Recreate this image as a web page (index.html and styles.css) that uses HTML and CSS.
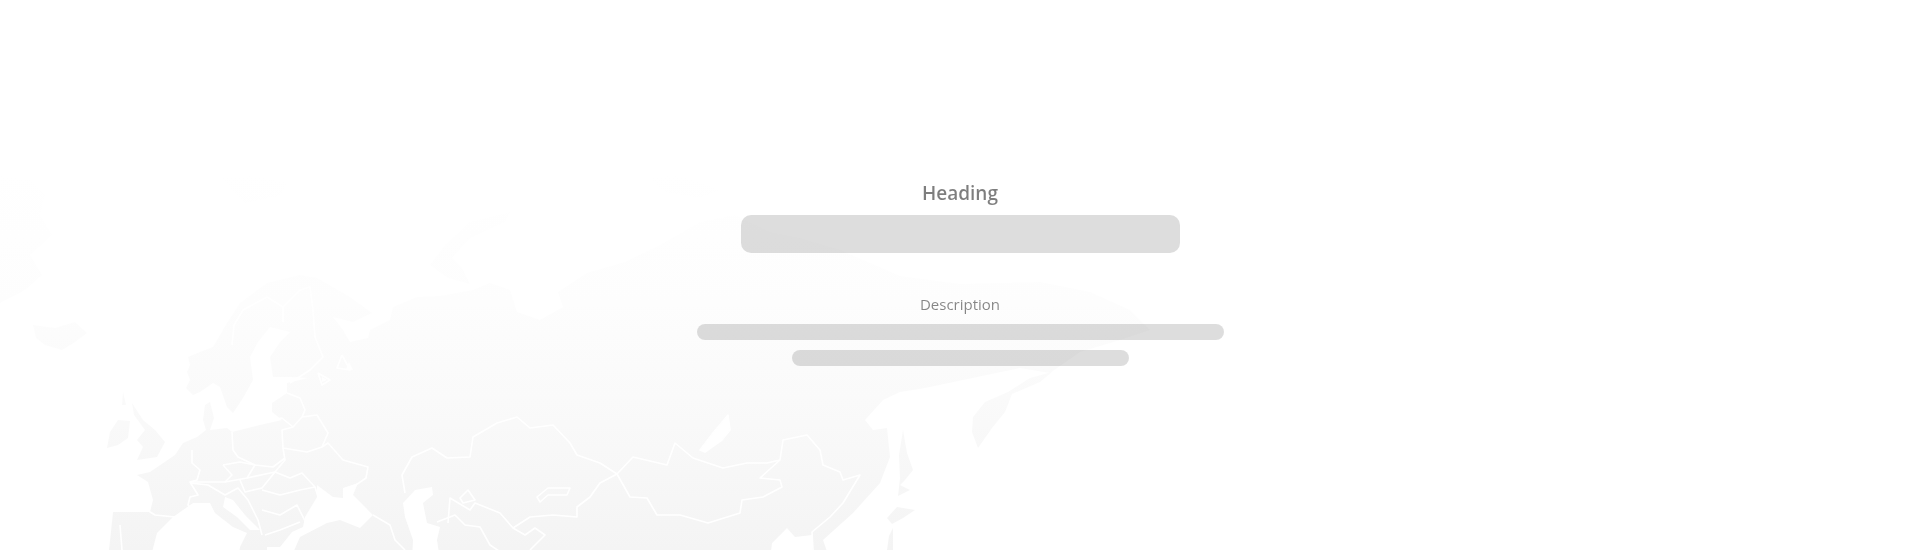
FILE: index.html
```html
<!DOCTYPE html>
<html lang="en">
<head>
    <meta charset="UTF-8">
    <meta name="viewport" content="width=device-width, initial-scale=1.0">
    <title>Heading</title>
    <link rel="stylesheet" href="styles.css">
</head>
<body>
    <!-- world map behind the placeholder -->
    <svg class="world-map" viewBox="0 0 1920 550" aria-hidden="true">
        <defs>
            <linearGradient id="landFade" gradientUnits="userSpaceOnUse" x1="0" y1="170" x2="0" y2="550">
                <stop offset="0" stop-color="#ffffff"/>
                <stop offset="0.35" stop-color="#fdfdfd"/>
                <stop offset="0.6" stop-color="#fafafa"/>
                <stop offset="1" stop-color="#f4f4f4"/>
            </linearGradient>
        </defs>

        <g fill="url(#landFade)">
            <!-- Eurasia -->
            <path d="M108 560 L112 522 L113 512 L150 512 L153 500 L148 482 L137 475 L150 472 L175 455 L183 443 L197 437 L206 430 L203 420 L205 405 L210 402 L214 418 L210 430 L227 428 L232 432 L260 425 L282 420 L272 412 L272 403 L287 393 L287 383 L308 378 L290 377 L273 377 L270 357 L280 342 L290 332 L270 327 L258 342 L250 357 L253 380 L243 398 L233 413 L227 407 L220 387 L213 383 L200 392 L193 395 L186 388 L190 380 L187 372 L190 365 L188 357 L200 352 L213 347 L220 335 L227 323 L240 303 L267 283 L300 275 L317 278 L350 297 L372 313 L353 322 L333 317 L343 330 L350 342 L368 338 L370 330 L390 320 L393 307 L417 297 L440 296 L473 290 L490 283 L510 290 L517 312 L540 320 L563 307 L558 292 L587 273 L625 262 L660 245 L700 222 L735 215 L770 232 L800 238 L840 250 L900 276 L960 284 L1040 282 L1090 292 L1130 310 L1150 330 L1120 340 L1080 352 L1050 373 L1020 368 L963 380 L925 388 L900 392 L883 400 L865 420 L873 430 L887 428 L890 457 L880 483 L853 513 L823 540 L830 560 Z"/>
            <!-- Kamchatka -->
            <path d="M1052 372 L1030 378 L1008 392 L985 402 L973 417 L972 432 L978 448 L992 428 L1005 412 L1012 394 L1040 382 Z"/>
            <!-- Sakhalin -->
            <path d="M903 430 L907 453 L913 470 L905 480 L900 485 L910 490 L898 496 L900 478 L899 455 Z"/>
            <!-- Japan -->
            <path d="M887 518 L897 507 L915 510 L903 518 L892 524 Z"/>
            <path d="M893 528 L893 550 L887 550 L889 536 Z"/>
            <!-- Iceland -->
            <path d="M33 325 L55 328 L75 322 L87 333 L75 342 L62 350 L45 345 L36 338 Z"/>
            <!-- Greenland tip -->
            <path d="M0 175 L30 180 L45 195 L40 215 L52 235 L30 255 L42 275 L25 290 L0 303 Z"/>
            <!-- Svalbard -->
            <path d="M222 178 L250 176 L288 182 L280 196 L245 203 L232 190 Z"/>
            <!-- Novaya Zemlya -->
            <path d="M510 212 L470 222 L445 245 L430 265 L448 278 L470 284 L462 268 L452 258 L470 238 L505 222 Z"/>
            <!-- Severnaya Zemlya -->
            <path d="M648 177 L680 175 L720 190 L700 198 L665 192 Z"/>
            <!-- British Isles -->
            <path d="M132 403 L143 420 L155 430 L165 442 L157 457 L137 460 L143 447 L137 440 L145 430 L134 415 Z"/>
            <path d="M107 448 L110 432 L118 420 L130 421 L128 438 L118 445 Z"/>
            <path d="M123 392 L126 405 L122 405 Z"/>
            <!-- Mediterranean islands -->
            <path d="M207 515 L211 517 L208 531 L205 528 Z"/>
            <path d="M205 533 L209 533 L207 545 L203 545 Z"/>
        </g>

        <!-- inland seas -->
        <g class="seas">
            <path d="M150 560 L157 533 L173 517 L193 503 L210 503 L215 513 L233 527 L247 533 L240 547 L238 560 Z"/>
            <path d="M225 497 L223 507 L237 517 L250 530 L260 530 L245 515 L233 500 Z"/>
            <path d="M267 560 L267 547 L280 547 L292 532 L303 527 L305 517 L317 497 L317 485 L333 497 L343 498 L343 488 L358 483 L353 495 L373 515 L360 528 L340 520 L327 523 L300 537 L290 560 Z"/>
            <path d="M403 503 L415 490 L432 487 L433 495 L423 503 L427 523 L440 527 L437 540 L440 560 L412 560 L413 540 L405 517 Z"/>
            <path d="M772 543 L787 528 L795 537 L812 535 L812 560 L770 560 Z"/>
            <path d="M700 450 L713 433 L728 415 L730 430 L722 440 L705 452 Z"/>
            <path d="M349 362 L353 370 L346 369 Z"/>
            <path d="M322 377 L327 380 L322 382 Z"/>
        </g>

        <!-- borders -->
        <g class="borders">
            <path d="M232 345 L234 325 L243 310 L267 297 L283 307 L283 322"/>
            <path d="M283 307 L300 290 L310 287 L313 310 L315 337 L323 357 L310 370 L290 383"/>
            <path d="M318 373 L330 380 L322 385 L318 373"/>
            <path d="M342 355 L350 370 L337 368 L342 355"/>
            <path d="M302 417 L317 415 L328 433 L322 447 L307 452 L283 448 L282 430 L293 427 L302 417"/>
            <path d="M287 393 L300 398 L305 410 L302 417"/>
            <path d="M270 420 L282 418 L293 427"/>
            <path d="M283 448 L285 460 L275 472 L290 478 L302 473 L315 487 L318 497"/>
            <path d="M322 447 L328 443 L343 460 L368 467 L366 478 L353 487"/>
            <path d="M232 432 L233 450 L238 457 L255 465 L273 467 L285 458"/>
            <path d="M192 450 L192 463 L200 470 L197 480 L190 482 L198 495 L190 497 L188 505 L192 510"/>
            <path d="M223 465 L232 475 L225 482 L210 482 L190 482"/>
            <path d="M223 465 L240 462 L255 465 L247 478 L225 482"/>
            <path d="M247 478 L275 472 L262 488 L245 492 L240 480"/>
            <path d="M190 483 L208 485 L225 495 L238 488 L248 500 L258 520 L262 535"/>
            <path d="M262 490 L280 495 L300 490 L315 487"/>
            <path d="M262 510 L280 515 L297 505 L308 527"/>
            <path d="M265 535 L280 530 L300 522"/>
            <path d="M147 510 L155 515 L175 517"/>
            <path d="M120 525 L122 550"/>
            <path d="M405 493 L402 475 L412 457 L432 448 L447 458 L470 457 L473 437 L497 423 L517 417 L530 428 L553 425 L570 443 L577 455 L600 463 L617 474"/>
            <path d="M617 474 L633 457 L667 465 L675 443 L693 458 L723 468 L747 463 L767 463 L780 460 L783 440 L807 435 L820 450 L823 465 L840 472 L843 480 L860 475 L843 503 L830 517 L812 532 L813 550"/>
            <path d="M617 474 L600 483 L590 497 L577 507 L577 517 L553 515 L530 517 L513 528 L500 513 L475 503 L470 510 L450 498 L448 523"/>
            <path d="M617 474 L630 497 L647 498 L657 515 L680 515 L708 523 L740 513 L742 500 L763 497 L782 487 L780 480 L760 478 L780 460"/>
            <path d="M700 450 L713 433 L728 415 L730 430 L722 440 L705 452 Z"/>
            <path d="M537 497 L548 488 L570 488 L567 495 L548 495 L540 502 Z"/>
            <path d="M460 498 L468 490 L475 500 L463 503 Z"/>
            <path d="M513 528 L525 535 L535 528 L545 535 L530 550"/>
            <path d="M437 522 L455 515 L465 525 L480 527 L490 545 L505 555"/>
            <path d="M373 515 L390 525 L395 540 L405 550"/>
        </g>
    </svg>

    <div class="placeholder">
        <h1 class="heading">Heading</h1>
        <div class="skeleton skeleton-title"></div>
        <p class="description">Description</p>
        <div class="skeleton skeleton-line"></div>
        <div class="skeleton skeleton-line short"></div>
    </div>
</body>
</html>
```

FILE: styles.css
```css
* {
    margin: 0;
    padding: 0;
    box-sizing: border-box;
}

html, body {
    height: 100%;
}

body {
    font-family: 'Open Sans', 'Noto Sans', sans-serif;
    background: #ffffff;
    overflow: hidden;
    position: relative;
}

.world-map {
    position: absolute;
    top: 0;
    left: 0;
    width: 1920px;
    height: 550px;
    filter: blur(0.5px);
}

.seas {
    fill: #ffffff;
}

.borders {
    fill: none;
    stroke: #ffffff;
    stroke-width: 1.6;
    stroke-linejoin: round;
}

.placeholder {
    position: relative;
    display: flex;
    flex-direction: column;
    align-items: center;
    padding-top: 180px;
}

.heading {
    font-size: 19px;
    font-weight: 600;
    line-height: 26px;
    color: #000000;
    opacity: 0.5;
    margin-bottom: 9px;
}

.description {
    font-size: 15px;
    font-weight: 400;
    line-height: 22px;
    color: #000000;
    opacity: 0.47;
    margin-top: 40px;
    margin-bottom: 9px;
}

.skeleton {
    background: rgba(0, 0, 0, 0.135);
}

.skeleton-title {
    width: 439px;
    height: 38px;
    border-radius: 10px;
}

.skeleton-line {
    width: 527px;
    height: 16px;
    border-radius: 8px;
    margin-bottom: 10px;
}

.skeleton-line.short {
    width: 337px;
}
```
